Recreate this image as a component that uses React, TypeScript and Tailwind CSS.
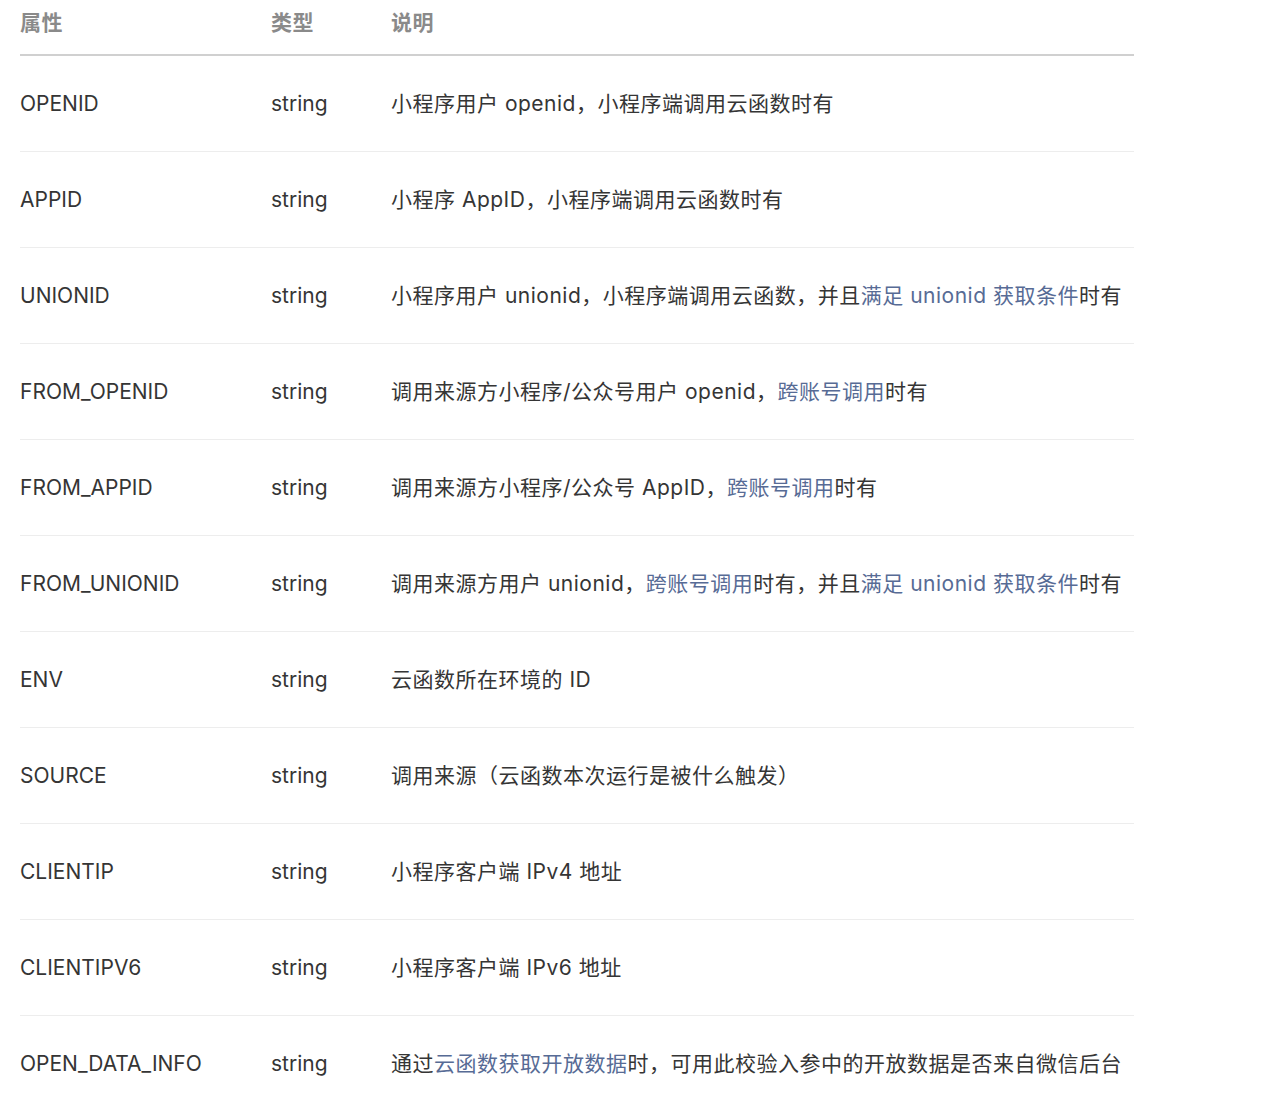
const link = 'text-[#576b95]';

type Part = string | { a: string };

const rows: { name: string; type: string; desc: Part[] }[] = [
  { name: 'OPENID', type: 'string', desc: ['小程序用户 openid，小程序端调用云函数时有'] },
  { name: 'APPID', type: 'string', desc: ['小程序 AppID，小程序端调用云函数时有'] },
  {
    name: 'UNIONID',
    type: 'string',
    desc: ['小程序用户 unionid，小程序端调用云函数，并且', { a: '满足 unionid 获取条件' }, '时有'],
  },
  {
    name: 'FROM_OPENID',
    type: 'string',
    desc: ['调用来源方小程序/公众号用户 openid，', { a: '跨账号调用' }, '时有'],
  },
  {
    name: 'FROM_APPID',
    type: 'string',
    desc: ['调用来源方小程序/公众号 AppID，', { a: '跨账号调用' }, '时有'],
  },
  {
    name: 'FROM_UNIONID',
    type: 'string',
    desc: ['调用来源方用户 unionid，', { a: '跨账号调用' }, '时有，并且', { a: '满足 unionid 获取条件' }, '时有'],
  },
  { name: 'ENV', type: 'string', desc: ['云函数所在环境的 ID'] },
  { name: 'SOURCE', type: 'string', desc: ['调用来源（云函数本次运行是被什么触发）'] },
  { name: 'CLIENTIP', type: 'string', desc: ['小程序客户端 IPv4 地址'] },
  { name: 'CLIENTIPV6', type: 'string', desc: ['小程序客户端 IPv6 地址'] },
  {
    name: 'OPEN_DATA_INFO',
    type: 'string',
    desc: ['通过', { a: '云函数获取开放数据' }, '时，可用此校验入参中的开放数据是否来自微信后台'],
  },
];

export default function App() {
  return (
    <div
      className="min-h-[1094px] bg-white pl-[20px] text-[21px] leading-[28px] text-[#353535]"
      style={{ fontFamily: 'Inter, "Noto Sans CJK SC", sans-serif' }}
    >
      <div className="w-[1114px]">
        {/* header */}
        <div className="grid h-[56px] grid-cols-[251px_120px_1fr] border-b-2 border-[#d0d0d0] pt-[9px] font-semibold tracking-[0.5px] text-[#8a8a8a]">
          <div>属性</div>
          <div>类型</div>
          <div>说明</div>
        </div>

        {rows.map((row, i) => (
          <div
            key={row.name}
            className={
              'grid h-[96px] grid-cols-[251px_120px_1fr] items-center ' +
              (i < rows.length - 1 ? 'border-b border-[#ededed]' : '')
            }
          >
            <div>{row.name}</div>
            <div>{row.type}</div>
            <div className="whitespace-nowrap tracking-[0.5px]">
              {row.desc.map((p, j) =>
                typeof p === 'string' ? (
                  <span key={j}>{p}</span>
                ) : (
                  <span key={j} className={link}>
                    {p.a}
                  </span>
                ),
              )}
            </div>
          </div>
        ))}
      </div>
    </div>
  );
}
